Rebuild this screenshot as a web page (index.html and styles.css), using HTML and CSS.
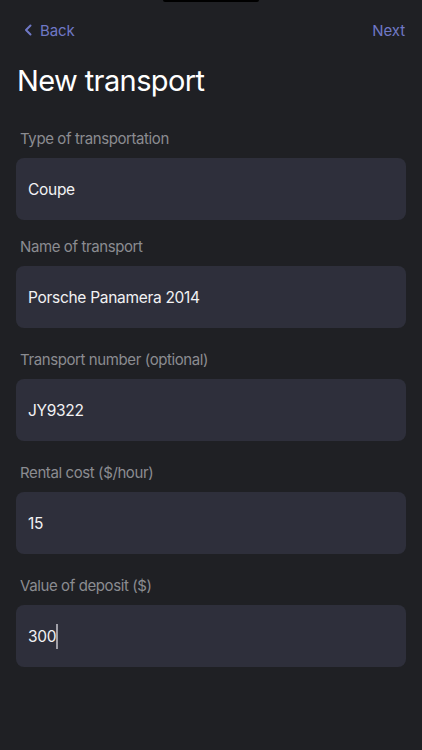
FILE: index.html
```html
<!DOCTYPE html>
<html lang="en">
<head>
    <meta charset="UTF-8">
    <meta name="viewport" content="width=device-width, initial-scale=1.0">
    <title>New transport</title>
    <link rel="stylesheet" href="styles.css">
</head>
<body>
    <div class="notch"></div>

    <div class="nav">
        <a class="nav-btn back">
            <svg class="chevron" width="8" height="12" viewBox="0 0 8 12">
                <path d="M6.5 1.5 L2 6 L6.5 10.5" fill="none" stroke="currentColor" stroke-width="2" stroke-linecap="round" stroke-linejoin="round"/>
            </svg>
            Back
        </a>
        <a class="nav-btn">Next</a>
    </div>

    <h1 class="title">New transport</h1>

    <form class="form">
        <div class="field first">
            <label class="field-label">Type of transportation</label>
            <div class="field-input">Coupe</div>
        </div>
        <div class="field">
            <label class="field-label">Name of transport</label>
            <div class="field-input">Porsche Panamera 2014</div>
        </div>
        <div class="field wide">
            <label class="field-label">Transport number (optional)</label>
            <div class="field-input">JY9322</div>
        </div>
        <div class="field wide">
            <label class="field-label">Rental cost ($/hour)</label>
            <div class="field-input">15</div>
        </div>
        <div class="field wide">
            <label class="field-label">Value of deposit ($)</label>
            <div class="field-input">300<span class="caret"></span></div>
        </div>
    </form>
</body>
</html>
```

FILE: styles.css
```css
* {
    margin: 0;
    padding: 0;
    box-sizing: border-box;
}
body {
    font-family: 'Inter', 'Liberation Sans', sans-serif;
    background: #1f2024;
    color: #ffffff;
    width: 422px;
    height: 750px;
    overflow: hidden;
}
.notch {
    width: 96px;
    height: 2px;
    margin: 0 auto;
    background: #000000;
    border-radius: 0 0 2px 2px;
}
.nav {
    display: flex;
    justify-content: space-between;
    align-items: center;
    padding: 0 17px 0 24px;
    height: 56px;
}
.nav-btn {
    color: #6f78c6;
    font-size: 15px;
    letter-spacing: -0.1px;
    display: flex;
    align-items: center;
    gap: 8px;
}
.chevron {
    display: block;
}
.title {
    font-size: 29px;
    font-weight: 400;
    letter-spacing: -0.6px;
    padding: 5px 17px 0;
    line-height: 36px;
}
.form {
    padding: 0 16px;
}
.field {
    margin-top: 18px;
}
.field.first {
    margin-top: 31px;
}
.field.wide {
    margin-top: 23px;
}
.field-label {
    display: block;
    color: #8b8c91;
    font-size: 15px;
    letter-spacing: -0.4px;
    line-height: 18px;
    padding-left: 4px;
    margin-bottom: 10px;
}
.field-input {
    height: 62px;
    background: #2e2f3b;
    border-radius: 8px;
    padding: 0 12px;
    display: flex;
    align-items: center;
    font-size: 15.5px;
    letter-spacing: -0.3px;
    color: #f2f2f4;
}
.caret {
    width: 2px;
    height: 25px;
    background: #a0a0a8;
}
```
